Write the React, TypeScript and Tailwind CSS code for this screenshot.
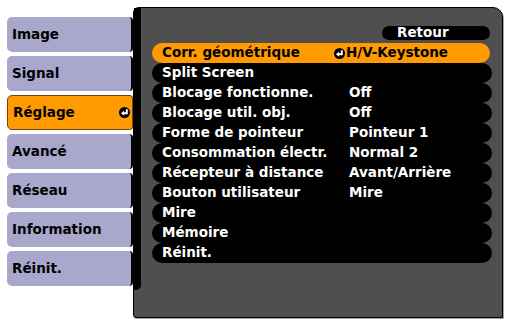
import React from "react";

const FONT = "font-['DejaVu_Sans',sans-serif] font-bold text-[13.5px] leading-none";

/* ── Enter glyph: white return arrow on a black disc ─────────────────────── */
function EnterIcon() {
  return (
    <svg width="11" height="11" viewBox="0 0 10 10" className="shrink-0">
      <circle cx="5" cy="5" r="5" fill="#000" />
      <path d="M7.1 2V5.7H4.2" stroke="#fff" strokeWidth="1.8" fill="none" />
      <path d="M1.8 5.7L4.6 3.4V8Z" fill="#fff" />
    </svg>
  );
}

const tabs = ["Image", "Signal", "Réglage", "Avancé", "Réseau", "Information", "Réinit."];
const ACTIVE_TAB = "Réglage";

const rows: { label: string; value?: string }[] = [
  { label: "Corr. géométrique", value: "H/V-Keystone" },
  { label: "Split Screen" },
  { label: "Blocage fonctionne.", value: "Off" },
  { label: "Blocage util. obj.", value: "Off" },
  { label: "Forme de pointeur", value: "Pointeur 1" },
  { label: "Consommation électr.", value: "Normal 2" },
  { label: "Récepteur à distance", value: "Avant/Arrière" },
  { label: "Bouton utilisateur", value: "Mire" },
  { label: "Mire" },
  { label: "Mémoire" },
  { label: "Réinit." },
];

export default function App() {
  return (
    <div className={`w-[506px] h-[321px] bg-white flex ${FONT}`}>
      {/* ── Tabs ── */}
      <div className="flex flex-col gap-[4px] pl-[7px] pt-[17px]">
        {tabs.map((t) =>
          t === ACTIVE_TAB ? (
            <div
              key={t}
              className="w-[126px] h-[35px] flex items-center justify-between pl-[5px] pr-[2px] bg-[#ff9a00] border border-[#6a4a12] rounded-l-[5px] rounded-r-[3px] text-black"
            >
              <span>{t}</span>
              <EnterIcon />
            </div>
          ) : (
            <div
              key={t}
              className="w-[126px] h-[35px] flex items-center pl-[5px] bg-[#a9a7cb] rounded-l-[5px] rounded-r-[4px] border-r-2 border-black text-black"
            >
              {t}
            </div>
          )
        )}
      </div>

      {/* ── Panel ── */}
      <div className="mt-[7px] w-[370px] h-[311px] bg-[#4f4f4f] border border-black rounded-tl-[6px] rounded-tr-[10px] rounded-bl-[3px] shadow-[1px_1px_0_#a8a8a8] flex">
        <div className="w-[7px] h-[282px] bg-black rounded-br-[5px] shrink-0" />
        <div className="flex-1 flex flex-col pt-[18px] pl-[11px] pr-[10px]">
          <div className="flex justify-end pr-[2px]">
            <div className="w-[108px] h-[14px] bg-black rounded-full text-white flex items-center pl-[15px]">
              Retour
            </div>
          </div>
          <div className="mt-[3px] flex flex-col">
            {rows.map((r, i) => (
              <div
                key={r.label}
                className={`h-[20px] rounded-full flex items-center pl-[10px] ${
                  i === 0 ? "bg-[#ff9a00] text-black mr-[2px]" : "bg-black text-white"
                }`}
              >
                <span className="w-[187px] shrink-0 whitespace-nowrap">{r.label}</span>
                {r.value && (
                  <span className="flex items-center whitespace-nowrap">
                    {i === 0 && (
                      <span className="-ml-[15px] mr-[1px] flex">
                        <EnterIcon />
                      </span>
                    )}
                    {r.value}
                  </span>
                )}
              </div>
            ))}
          </div>
        </div>
      </div>
    </div>
  );
}
